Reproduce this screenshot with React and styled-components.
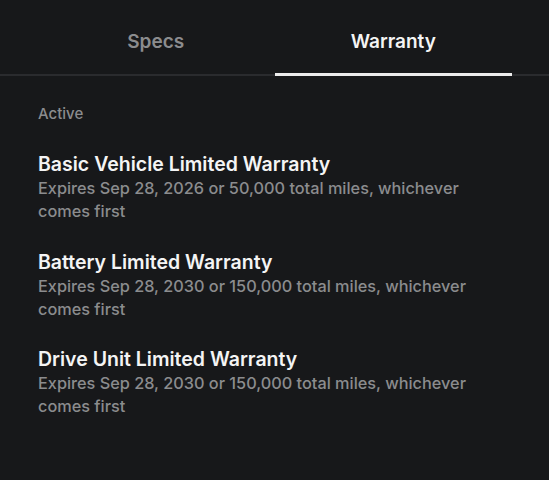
import React from "react";
import styled, { createGlobalStyle } from "styled-components";

const Global = createGlobalStyle`
  html, body { margin: 0; padding: 0; background: #17181a; }
  body { font-family: Inter, "Noto Sans", sans-serif; -webkit-font-smoothing: antialiased; }
`;

const Page = styled.div`
  width: 549px;
  height: 480px;
  background: #17181a;
  overflow: hidden;
`;

const TabBar = styled.div`
  display: flex;
  padding: 0 37px;
  border-bottom: 2px solid #2a2b2e;
`;

const Tab = styled.div`
  flex: 1;
  height: 76px;
  box-sizing: border-box;
  display: flex;
  align-items: center;
  justify-content: center;
  padding-top: 9px;
  font-size: 19px;
  font-weight: 600;
  color: ${(p) => (p.$active ? "#f4f4f4" : "#8b8c8e")};
  border-bottom: 3px solid ${(p) => (p.$active ? "#ececec" : "transparent")};
  margin-bottom: -2px;
`;

const Content = styled.div`
  padding: 28px 38px 0;
  display: flex;
  flex-direction: column;
`;

const Section = styled.div`
  font-size: 15px;
  line-height: 20px;
  font-weight: 500;
  color: #8b8c8e;
  margin-bottom: 27px;
`;

const Item = styled.div`
  display: flex;
  flex-direction: column;
  margin-bottom: 25.5px;
`;

const Title = styled.div`
  font-size: 19.5px;
  font-weight: 600;
  color: #f4f4f4;
  line-height: 26px;
`;

const Sub = styled.div`
  font-size: 16.3px;
  font-weight: 500;
  color: #8b8c8e;
  line-height: 23px;
  max-width: 470px;
`;

const items = [
  ["Basic Vehicle Limited Warranty", "Expires Sep 28, 2026 or 50,000 total miles, whichever comes first"],
  ["Battery Limited Warranty", "Expires Sep 28, 2030 or 150,000 total miles, whichever comes first"],
  ["Drive Unit Limited Warranty", "Expires Sep 28, 2030 or 150,000 total miles, whichever comes first"],
];

export default function App() {
  return (
    <Page>
      <Global />
      <TabBar>
        <Tab>Specs</Tab>
        <Tab $active>Warranty</Tab>
      </TabBar>
      <Content>
        <Section>Active</Section>
        {items.map(([t, s]) => (
          <Item key={t}>
            <Title>{t}</Title>
            <Sub>{s}</Sub>
          </Item>
        ))}
      </Content>
    </Page>
  );
}
